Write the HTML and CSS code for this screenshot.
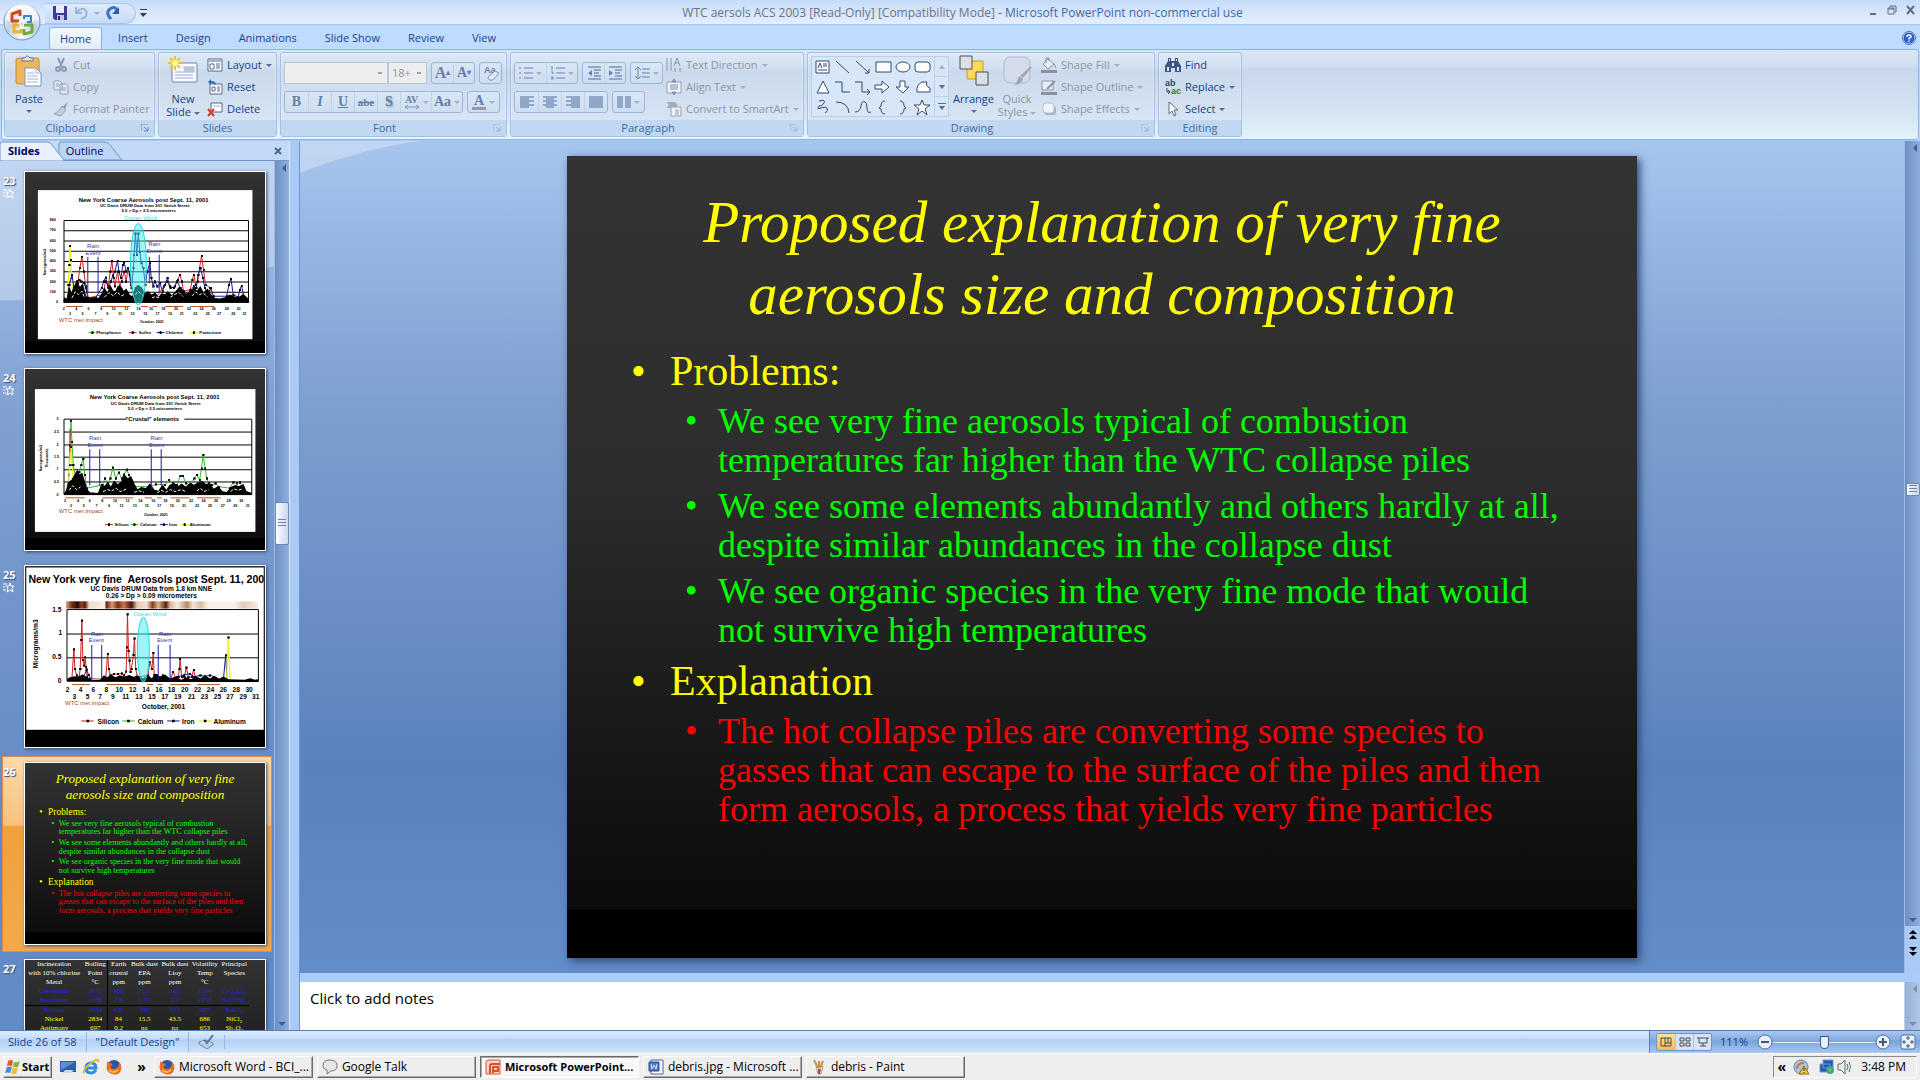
FILE: index.html
```html
<!DOCTYPE html>
<html lang="en">
<head>
    <meta charset="UTF-8">
    <meta name="viewport" content="width=device-width, initial-scale=1.0">
    <title>WTC aersols ACS 2003 - Microsoft PowerPoint</title>
    <link rel="stylesheet" href="styles.css">
</head>
<body>

<!-- Title bar -->
<header class="title-bar">
    <button class="orb" aria-label="Office Button">
        <svg viewBox="0 0 38 38" width="38" height="38">
            <defs>
                <radialGradient id="orb-fill" cx="50%" cy="85%" r="80%">
                    <stop offset="0" stop-color="#fff"/>
                    <stop offset=".5" stop-color="#c3cedd"/>
                    <stop offset="1" stop-color="#f4f8fd"/>
                </radialGradient>
                <!-- data point used by the chart thumbnails -->
                <marker id="dot" viewBox="0 0 7 7" refX="3" refY="3" markerWidth="7" markerHeight="7" markerUnits="userSpaceOnUse"><path d="M0 0h7v7H0z"/></marker>
                <clipPath id="plot-24"><rect x="118" y="140" width="568" height="241"/></clipPath>
                <clipPath id="plot-25"><rect x="127" y="131" width="579" height="220"/></clipPath>
            </defs>
            <circle cx="19" cy="19" r="18" fill="url(#orb-fill)" stroke="#6f8fb9"/>
            <path d="M2 17a17 17 0 0 1 34 0q-17 5-34 0z" fill="#fff" opacity=".6"/>
            <g fill="none" stroke-linejoin="round">
                <path d="M16 18H9V11l8-3v5" stroke="#d3481c" stroke-width="3"/>
                <path d="M21 16v-3h7v6h-4" stroke="#3f82c9" stroke-width="2"/>
                <path d="M17 22h-6v7h7v-3" stroke="#eeb226" stroke-width="3"/>
                <path d="M21 22h8v7l-8 2v-5" stroke="#6cae3c" stroke-width="3"/>
                <path d="M14 20h4v-4M24 20h-4v-4M16 22h2v4M23 25h-3v-3" stroke="#fff"/>
            </g>
        </svg>
    </button>
    <div class="quick-access">
        <button aria-label="Save">
            <svg viewBox="0 0 16 16" width="16" height="16"><path d="M1 1h14v14H3l-2-2z" fill="#403a97"/><path d="M4 1h8v7H4z" fill="#e9edfb"/><path d="M5 10h7v5H5z" fill="#c8c8dc"/><path d="M6 11h2v4H6z" fill="#2b2769"/></svg>
        </button>
        <button disabled aria-label="Undo">
            <svg viewBox="0 0 16 16" width="16" height="16"><path d="M3 2v6h6M4 7q6-6 9-1t-5 8" fill="none" stroke="#9db3d3" stroke-width="2"/></svg>
        </button>
        <i class="caret light"></i>
        <button aria-label="Redo">
            <svg viewBox="0 0 16 16" width="16" height="16"><path d="M6 14Q0 8 5 4t7 2" fill="none" stroke="#3f74c5" stroke-width="3"/><path d="M14 2v7H7z" fill="#2d5cae"/></svg>
        </button>
    </div>
    <button class="qat-more" aria-label="Customize Quick Access Toolbar">
        <svg viewBox="0 0 7 8" width="7" height="8"><path d="M0 0h7v1H0zM0 4h7L3 8z" fill="#2a3f63"/></svg>
    </button>
    <h1><span>WTC aersols ACS 2003 [Read-Only] [Compatibility Mode]</span> - Microsoft PowerPoint non-commercial use</h1>
    <div class="window-buttons">
        <button aria-label="Minimize"><svg viewBox="0 0 10 10" width="10" height="10"><path d="M2 8h6v2H2z" fill="#5f6f86"/></svg></button>
        <button aria-label="Restore"><svg viewBox="0 0 10 10" width="10" height="10"><path d="M3 2V1h6v6H8M1 3h6v6H1zM1 4h6" fill="none" stroke="#5f6f86"/></svg></button>
        <button aria-label="Close"><svg viewBox="0 0 10 10" width="10" height="10"><path d="M1 1l7 8M8 1L1 9" stroke="#5f6f86" stroke-width="2"/></svg></button>
    </div>
</header>

<!-- Ribbon tabs -->
<nav class="tabs">
    <button class="active">Home</button>
    <button>Insert</button>
    <button>Design</button>
    <button>Animations</button>
    <button>Slide Show</button>
    <button>Review</button>
    <button>View</button>
    <button class="help" aria-label="Help">
        <svg viewBox="0 0 14 14" width="14" height="14"><circle cx="7" cy="7" r="6" fill="#2a64c8" stroke="#d7e6fb"/><circle cx="7" cy="7" r="6.5" fill="none" stroke="#4a6fae"/><path d="M5 6q0-2 2-2t2 1.500q0 1-2 2v1M7 9.500v1.500" fill="none" stroke="#fff" stroke-width="1.500"/></svg>
    </button>
</nav>

<!-- Ribbon -->
<section class="ribbon">
    <div class="group clipboard">
        <div class="group-body">
            <button class="big">
                <svg viewBox="0 0 28 32" width="28" height="32"><rect x="1" y="3" width="23" height="26" rx="2" fill="#efb75a" stroke="#c88a35"/><path d="M7 6V3h3q2-4 5 0h3v3z" fill="#dfe3e8" stroke="#6c7684"/><path d="M10 13h11l5 5v13H10z" fill="#fff" stroke="#7e93b8"/><path d="M21 13v5h5M12 18h7M12 21h11M12 24h11M12 27h11" fill="none" stroke="#9db3d8"/></svg>
                <span>Paste</span>
                <i class="caret"></i>
            </button>
            <div class="stack">
                <button disabled><svg viewBox="0 0 16 16" width="16" height="16"><path d="M5 1l4 9M11 1L7 10" stroke="#8a9bb3" stroke-width="2"/><circle cx="5" cy="12" r="2" fill="none" stroke="#8a9bb3" stroke-width="2"/><circle cx="11" cy="12" r="2" fill="none" stroke="#8a9bb3" stroke-width="2"/></svg>Cut</button>
                <button disabled><svg viewBox="0 0 16 16" width="16" height="16"><path d="M1 2h6l2 2v7H1zM7 5h6l2 2v8H7z" fill="#e2e8f0" stroke="#97a5b9"/><path d="M3 5h3M3 7h3M9 9h4M9 11h4" stroke="#97a5b9"/></svg>Copy</button>
                <button disabled><svg viewBox="0 0 16 16" width="16" height="16"><path d="M15 1l-3 7-3-2z" fill="#8d9db4"/><path d="M9 5l4 4-5 6-7-2q5-2 8-8z" fill="#c2ccd9" stroke="#97a5b9"/></svg>Format Painter</button>
            </div>
        </div>
        <footer class="with-launcher">Clipboard<svg class="launcher" viewBox="0 0 8 8" width="8" height="8"><path d="M0 7V0h7M3 3l4 4M7 3v4H3" fill="none" stroke="#6a8cbd"/></svg></footer>
    </div>

    <div class="group slides">
        <div class="group-body">
            <button class="big">
                <svg viewBox="0 0 32 32" width="32" height="32"><rect x="5" y="8" width="25" height="19" rx="1" fill="#f8fafd" stroke="#6d84ab"/><path d="M16 12h11v5H8M8 20h18M8 23h18" fill="none" stroke="#9fb0cf"/><path d="M17 12h10v5H17z" fill="#b9c7de"/><path d="M8 1v14M1 8h14M3 3l10 10M13 3L3 13" stroke="#f1c232" stroke-width="2"/><circle cx="8" cy="8" r="3" fill="#fff6b0"/></svg>
                <span>New<br>Slide <i class="caret"></i></span>
            </button>
            <div class="stack">
                <button><svg viewBox="0 0 16 16" width="16" height="16"><path d="M1 2h14v12H1z" fill="#fff" stroke="#53698f"/><path d="M2 4h12M3 7h4v5H3zM9 7h4M9 9h4M9 11h4" fill="none" stroke="#53698f"/></svg>Layout <i class="caret"></i></button>
                <button><svg viewBox="0 0 16 16" width="16" height="16"><path d="M3 5h12v10H3z" fill="#fff" stroke="#53698f"/><path d="M5 8h3v4H5zM10 8h3M10 10h3M10 12h3" fill="none" stroke="#53698f"/><path d="M1 3l3-3v2q5 0 5 4-2-2-5-2v2z" fill="#2f67bd"/></svg>Reset</button>
                <button><svg viewBox="0 0 16 16" width="16" height="16"><path d="M4 2h11v9H4z" fill="#fff" stroke="#53698f"/><path d="M6 5h7" stroke="#9fb0cf"/><path d="M1 8l6 7M7 8l-6 7" stroke="#dc3a22" stroke-width="2"/></svg>Delete</button>
            </div>
        </div>
        <footer>Slides</footer>
    </div>

    <div class="group font">
        <div class="group-body">
            <div class="rows">
                <div class="row">
                    <div class="combo-row">
                        <select class="font-name" disabled aria-label="Font"><option></option></select>
                        <select class="font-size" disabled aria-label="Font Size"><option>18+</option></select>
                    </div>
                    <div class="button-set">
                        <button disabled class="serif grow">A<sup>▴</sup></button>
                        <button disabled class="serif shrink">A<sup>▾</sup></button>
                    </div>
                    <div class="button-set">
                        <button disabled class="clear" aria-label="Clear Formatting"><svg viewBox="0 0 18 18" width="18" height="18"><text x="2" y="9" class="svg-aa">Aa</text><path d="M6 13l7-6 4 2-6 7q-5 1-5-3z" fill="#e5ebf4" stroke="#8195b6"/></svg></button>
                    </div>
                </div>
                <div class="row">
                    <div class="button-set even">
                        <button disabled class="serif"><b>B</b></button>
                        <button disabled class="serif"><em>I</em></button>
                        <button disabled class="serif"><u>U</u></button>
                        <button disabled class="serif strike"><s>abe</s></button>
                        <button disabled class="serif shadow">S</button>
                        <button disabled class="serif wide"><svg viewBox="0 0 16 16" width="16" height="16"><text x="1" y="9" class="svg-av">AV</text><path d="M1 13h14M4 11l-3 2 3 2M12 11l3 2-3 2" fill="none" stroke="#7f96bd"/></svg><i class="caret light"></i></button>
                        <button disabled class="serif wide">Aa<i class="caret light"></i></button>
                    </div>
                    <div class="button-set">
                        <button disabled class="serif wide colour"><span>A</span><i class="caret light"></i></button>
                    </div>
                </div>
            </div>
        </div>
        <footer class="with-launcher">Font<svg class="launcher" viewBox="0 0 8 8" width="8" height="8"><path d="M0 7V0h7M3 3l4 4M7 3v4H3" fill="none" stroke="#9bb3d6"/></svg></footer>
    </div>

    <div class="group paragraph">
        <div class="group-body">
            <div class="rows">
                <div class="row">
                    <div class="button-set">
                        <button disabled class="wide" aria-label="Bullets"><svg viewBox="0 0 14 14" width="14" height="14"><path d="M5 2h9M5 7h9M5 12h9M0 2h2M0 7h2M0 12h2" stroke="#6883b0"/></svg><i class="caret light"></i></button>
                        <button disabled class="wide" aria-label="Numbering"><svg viewBox="0 0 14 14" width="14" height="14"><path d="M5 2h9M5 7h9M5 12h9M1 0v4M0 6h2v2M0 11h2v2H0" fill="none" stroke="#6883b0"/></svg><i class="caret light"></i></button>
                    </div>
                    <div class="button-set">
                        <button disabled aria-label="Decrease Indent"><svg viewBox="0 0 16 14" width="16" height="14"><path d="M2 1h13M8 4h7M8 7h5M8 10h7M2 13h13" stroke="#4f6d9f"/><path d="M6 4v6L2 7zM0 7h4" fill="#6883b0"/></svg></button>
                        <button disabled aria-label="Increase Indent"><svg viewBox="0 0 16 14" width="16" height="14"><path d="M2 1h13M8 4h7M8 7h5M8 10h7M2 13h13" stroke="#4f6d9f"/><path d="M2 4v6l4-3z" fill="#6883b0"/></svg></button>
                    </div>
                    <div class="button-set">
                        <button disabled class="wide" aria-label="Line Spacing"><svg viewBox="0 0 15 14" width="15" height="14"><path d="M7 3h8M7 7h8M7 11h8M3 1v12M0 4l3-3 3 3M0 10l3 3 3-3" fill="none" stroke="#6883b0"/></svg><i class="caret light"></i></button>
                    </div>
                </div>
                <div class="row">
                    <div class="button-set even">
                        <button disabled aria-label="Align Left"><svg viewBox="0 0 14 12" width="14" height="12"><path d="M0 1h14M0 3h9M0 5h14M0 7h9M0 9h14M0 11h9" stroke="#4f6d9f"/></svg></button>
                        <button disabled aria-label="Center"><svg viewBox="0 0 14 12" width="14" height="12"><path d="M0 1h14M3 3h8M0 5h14M3 7h8M0 9h14M3 11h8" stroke="#4f6d9f"/></svg></button>
                        <button disabled aria-label="Align Right"><svg viewBox="0 0 14 12" width="14" height="12"><path d="M0 1h14M5 3h9M0 5h14M5 7h9M0 9h14M5 11h9" stroke="#4f6d9f"/></svg></button>
                        <button disabled aria-label="Justify"><svg viewBox="0 0 14 12" width="14" height="12"><path d="M0 1h14M0 3h14M0 5h14M0 7h14M0 9h14M0 11h14" stroke="#4f6d9f"/></svg></button>
                    </div>
                    <div class="button-set">
                        <button disabled class="wide" aria-label="Columns"><svg viewBox="0 0 14 12" width="14" height="12"><path d="M0 1h6M0 3h6M0 5h6M0 7h6M0 9h6M0 11h6M8 1h6M8 3h6M8 5h6M8 7h6M8 9h6M8 11h6" stroke="#4f6d9f"/></svg><i class="caret light"></i></button>
                    </div>
                </div>
            </div>
            <div class="stack">
                <button disabled><svg viewBox="0 0 16 16" width="16" height="16"><path d="M1 1v13M5 1v13M9 11v4M14 11v4M8 9l3-8 3 8M9 6h4" fill="none" stroke="#7f93b3"/></svg>Text Direction <i class="caret light"></i></button>
                <button disabled><svg viewBox="0 0 16 16" width="16" height="16"><path d="M1 3h14v11H1z" fill="#eef2f7" stroke="#93a1b5"/><path d="M4 6h8M4 8h8M4 10h8M8 0L6 3h4zM8 16l-2-3h4z" fill="#8695ab" stroke="#8695ab"/></svg>Align Text <i class="caret light"></i></button>
                <button disabled><svg viewBox="0 0 16 16" width="16" height="16"><path d="M0 1h9l3 3-3 3H0l3-3z" fill="#a4aebc"/><path d="M5 6h10v9H5z" fill="#f2f5f9" stroke="#93a1b5"/><path d="M9 9h4M9 11h4M9 13h4" stroke="#93a1b5"/></svg>Convert to SmartArt <i class="caret light"></i></button>
            </div>
        </div>
        <footer class="with-launcher">Paragraph<svg class="launcher" viewBox="0 0 8 8" width="8" height="8"><path d="M0 7V0h7M3 3l4 4M7 3v4H3" fill="none" stroke="#9bb3d6"/></svg></footer>
    </div>

    <div class="group drawing">
        <div class="group-body">
            <div class="gallery">
                <svg viewBox="0 0 122 60" width="122" height="60" fill="none" stroke="#33486f">
                    <path d="M4 4h13v12H4z" fill="#fff"/><path d="M6 11l2-5 2 5M11 7h4M11 9h4M6 13h9"/>
                    <path d="M24 4l13 12M44 4l13 12M57 12v4h-4"/>
                    <path d="M64 5h15v10H64z" fill="#fff"/><ellipse cx="91" cy="10" rx="7" ry="5" fill="#fff"/><rect x="103" y="5" width="15" height="10" rx="3" fill="#fff"/>
                    <path d="M11 24L5 36h12z" fill="#fff"/><path d="M23 25h7v10h8M43 25h7v10h8M55 32l3 3-3 3"/>
                    <path d="M63 28h7v-4l7 6-7 6v-4h-7zM88 24h5v6h4l-6 6-7-6h4z" fill="#fff"/><path d="M105 35q-1-7 5-10h5q-2 4 3 6v4z" fill="#fff"/>
                    <path d="M7 44q7-2 5 2t-5 3q-3 4 2 2t6 0q2 3-2 5M24 45q12 0 13 11M43 55q5 0 6-6t4-4q2 0 2 6t4 4M73 44q-4 0-4 5l-2 2 2 1q0 5 4 5M88 44q4 0 4 5l2 2-2 1q0 5-4 5"/>
                    <path d="M110 43l2 5h6l-5 4 2 6-5-4-5 4 2-6-5-4h6z" fill="#fff"/>
                </svg>
                <div class="gallery-scroll">
                    <button aria-label="Row up" disabled><svg viewBox="0 0 6 4" width="6" height="4"><path d="M0 4l3-4 3 4z" fill="#a3b0c4"/></svg></button>
                    <button aria-label="Row down"><svg viewBox="0 0 6 4" width="6" height="4"><path d="M0 0h6L3 4z" fill="#4f6f9f"/></svg></button>
                    <button aria-label="More shapes"><svg viewBox="0 0 8 7" width="8" height="7"><path d="M0 0h8v1H0zM1 3h6L4 7z" fill="#4f6f9f"/></svg></button>
                </div>
            </div>
            <button class="big arrange">
                <svg viewBox="0 0 32 32" width="32" height="32"><path d="M9 6h16v18H9z" fill="#ffd95a" stroke="#c9992c"/><path d="M2 1h12v13H2z" fill="#dcdfe3" stroke="#4c525b"/><path d="M18 17h12v13H18z" fill="#dcdfe3" stroke="#4c525b"/></svg>
                <span>Arrange</span>
                <i class="caret"></i>
            </button>
            <button class="big" disabled>
                <svg viewBox="0 0 32 32" width="32" height="32"><rect x="3" y="2" width="26" height="26" rx="6" fill="#d3dce8" stroke="#aab8ca"/><path d="M31 12l-9 11-3-2 10-9zM18 21l4 3q-2 6-9 6 3-2 5-9z" fill="#9aa8ba"/></svg>
                <span>Quick<br>Styles <i class="caret light"></i></span>
            </button>
            <div class="stack">
                <button disabled><svg viewBox="0 0 16 16" width="16" height="16"><path d="M7 2l6 5-6 5-5-5z" fill="#e8edf4" stroke="#8493a8"/><path d="M5 6V1h3v3M13 7l2 4" fill="none" stroke="#8493a8"/><path d="M0 13h16v3H0z" fill="#8c9199"/></svg>Shape Fill <i class="caret light"></i></button>
                <button disabled><svg viewBox="0 0 16 16" width="16" height="16"><path d="M1 2h11v9H1z" fill="#e8edf4" stroke="#8493a8"/><path d="M14 2L6 10" stroke="#8493a8" stroke-width="2"/><path d="M0 13h16v3H0z" fill="#8c9199"/></svg>Shape Outline <i class="caret light"></i></button>
                <button disabled><svg viewBox="0 0 16 16" width="16" height="16"><rect x="3" y="5" width="12" height="9" rx="3" fill="#a5b1c2"/><rect x="2" y="2" width="11" height="10" rx="3" fill="#eef2f7" stroke="#b3bfce"/></svg>Shape Effects <i class="caret light"></i></button>
            </div>
        </div>
        <footer class="with-launcher">Drawing<svg class="launcher" viewBox="0 0 8 8" width="8" height="8"><path d="M0 7V0h7M3 3l4 4M7 3v4H3" fill="none" stroke="#9bb3d6"/></svg></footer>
    </div>

    <div class="group editing">
        <div class="group-body">
            <div class="stack">
                <button><svg viewBox="0 0 16 16" width="16" height="16"><path d="M3 1h3v3h4V1h3v3l3 5v6h-6v-4H6v4H0V9l3-5z" fill="#3d5787"/><path d="M2 10h2v4H2zM12 10h2v4h-2zM7 6h2v3H7zM4 2h1v2H4zM11 2h1v2h-1z" fill="#dce8f8"/></svg>Find</button>
                <button><svg viewBox="0 0 16 16" width="16" height="16"><text x="0" y="7" class="svg-ab">ab</text><text x="6" y="15" class="svg-ac">ac</text><path d="M2 9v4h3M3 11l2 2-2 2" fill="none" stroke="#33486f"/></svg>Replace <i class="caret"></i></button>
                <button><svg viewBox="0 0 16 16" width="16" height="16"><path d="M4 1v12l3-3 2 5 2-1-2-5h4z" fill="#fff" stroke="#5b6b86"/></svg>Select <i class="caret"></i></button>
            </div>
        </div>
        <footer>Editing</footer>
    </div>
</section>

<!-- Work area -->
<main class="work">
    <aside class="panel">
        <div class="panel-tabs">
            <svg class="tab-shape" viewBox="0 0 130 20" width="130" height="20"><path d="M59 19V3q0-2 3-2h43q3 0 5 3l12 15z" fill="#bcd5f5" stroke="#6f97cd"/><path d="M0 20V3q0-2 3-2h44q3 0 5 3l12 15v1z" fill="#e8f1fd" stroke="#6f97cd"/></svg>
            <button class="active">Slides</button>
            <button>Outline</button>
            <button class="close" aria-label="Close panel"><svg viewBox="0 0 8 8" width="8" height="8"><path d="M1 1l6 6M7 1L1 7" stroke="#4d6a97" stroke-width="2"/></svg></button>
        </div>
        <div class="panel-body">
            <ol class="thumbs">
                <li>
                    <div class="num">23<svg viewBox="0 0 12 11" width="12" height="11"><path d="M7 1l1 3h3L9 6l1 4-3-2-3 2 1-4-2-2h3zM0 2h4M0 5h2M0 8h3" fill="none" stroke="#fff"/></svg></div>
                    <svg class="thumb" viewBox="0 0 726 546">
                        <rect x="39" y="54" width="649" height="451" fill="#fff"/>
                        <g class="chart-text">
                            <text x="359" y="89" class="t18">New York Coarse Aerosols post Sept. 11, 2001</text>
                            <text x="362" y="104" class="t13">UC Davis DRUM Data from 201 Varick Street</text>
                            <text x="374" y="119" class="t13">5.0 &gt; Dp &gt; 2.5 micrometers</text>
                            <text x="84" y="148" class="t11">800</text><text x="84" y="179" class="t11">700</text><text x="84" y="210" class="t11">600</text><text x="84" y="241" class="t11">500</text><text x="84" y="272" class="t11">400</text><text x="84" y="303" class="t11">300</text><text x="84" y="335" class="t11">200</text><text x="84" y="366" class="t11">100</text><text x="97" y="396" class="t11">0</text>
                            <text x="62" y="275" class="t11 up">Nanograms/m3</text>
                            <text x="384" y="457" class="t11">October, 2001</text>
                            <text x="253" y="490" class="t13">Phosphorus</text><text x="363" y="490" class="t13">Sulfur</text><text x="452" y="490" class="t13">Chlorine</text><text x="560" y="490" class="t13">Potassium</text>
                        </g>
                        <g class="axis-days"><text x="117" y="416">2</text><text x="155" y="416">4</text><text x="192" y="416">6</text><text x="231" y="416">8</text><text x="268" y="416">10</text><text x="306" y="416">12</text><text x="343" y="416">14</text><text x="381" y="416">16</text><text x="418" y="416">18</text><text x="457" y="416">20</text><text x="496" y="416">22</text><text x="534" y="416">24</text><text x="571" y="416">26</text><text x="610" y="416">28</text><text x="646" y="416">30</text><text x="136" y="432">3</text><text x="174" y="432">5</text><text x="213" y="432">7</text><text x="249" y="432">9</text><text x="288" y="432">11</text><text x="325" y="432">13</text><text x="364" y="432">15</text><text x="401" y="432">17</text><text x="439" y="432">19</text><text x="474" y="432">21</text><text x="515" y="432">23</text><text x="553" y="432">25</text><text x="588" y="432">27</text><text x="630" y="432">29</text><text x="664" y="432">31</text></g>
                        <path class="grid" d="M118 146h558v247H118zM118 177h558M118 208h558M118 239h558M118 270h558M118 301h558M118 332h558M118 363h558"/>
                        <polyline class="line yellow" points="128,388 131,340 134,280 136,223 139,265 141,318 146,380"/>
                        <polyline class="line red" points="150,350 160,335 166,290 172,255 178,300 184,345 192,380 236,370 244,330 252,345 258,300 263,267 268,320 272,345 280,300 286,345 292,330 300,300 306,330 312,290 320,340 330,375"/>
                        <polyline class="line red" points="400,375 420,345 430,330 440,350 454,345 462,325 469,310 474,330 480,360 500,355 506,325 511,310 516,340 522,330 528,290 534,252 540,295 546,340 560,350 566,370"/>
                        <polyline class="line navy" points="128,385 134,340 142,310 148,350 156,330 164,325 170,330 178,335 184,350 190,380 214,380 232,350 238,330 244,318 252,350 260,330 266,312 272,300 280,267 284,300 290,320 296,280 300,273 306,300 312,290 318,310 322,350 328,290 330,250 334,185 338,250 343,185 347,240 352,275 358,290 364,340 370,300 378,275 382,320 388,345 392,330 400,345 408,335 416,360 424,340 431,320 438,345 450,350 460,330 470,350 480,375 500,360 510,345 518,350 524,310 531,290 538,320 544,350 552,370 562,350 570,375 610,375 617,340 623,322 630,370 645,378 650,355 655,343 661,372"/>
                        <path class="base" d="M118 393l2-12 8 4 6-35 6 20 10-25 8-10 8 15 8-10 8 32 8 13 16-5 16 3 10-13 8-18 10 16 8-23 8 15 8 2 8-17 10 5 6 12 8-7 10 17 10 6 8-28 8-7 10 7 10 20 10-8 10 10 12-6 10 14 10-12 10 4 8-10 12 12 12-12 10-12 10 6 10 14 14-6 12-14 8 12 10-14 10 18 12-11 10 17 12 10 16 2 16-4 14-8 14 6 14 2 12-10 14 14 2 9z"/>
                        <path class="gap" d="M142 380l10-18 10 8 10-10 8 20M240 378l14-14 14 10 10-12 14 12 12-6M334 370l8-10 14 12M384 380l10-4 12 4M440 378l12-8 14-6 12 12M506 374l10-12 12 8 12-4 12 10"/>
                        <path class="rain" d="M190 256v108M221 256v108M376 256v80M406 250v115"/>
                        <ellipse class="ocean" cx="343" cy="278" rx="24" ry="123"/>
                        <g class="notes-text"><text x="349" y="144" class="cyan">Ocean Wind</text><text x="206" y="228">Rain</text><text x="206" y="249">Event</text><text x="391" y="222">Rain</text><text x="391" y="243">Event</text><text x="169" y="454" class="brown">WTC met impact</text></g>
                        <path class="met" d="M123 406h52M230 406h88M351 406h22M386 406h14M424 406h54M500 406h72"/>
                        <path class="line green" d="M192 485h20"/><path class="line red" d="M314 485h24"/><path class="line navy" d="M398 485h24"/><path class="line yellow" d="M498 485h28"/>
                        <path d="M201 481h6v8h-6zM323 481h6v8h-6zM407 481h6v8h-6zM508 481h6v8h-6z"/>
                    </svg>
                </li>
                <li>
                    <div class="num">24<svg viewBox="0 0 12 11" width="12" height="11"><path d="M7 1l1 3h3L9 6l1 4-3-2-3 2 1-4-2-2h3zM0 2h4M0 5h2M0 8h3" fill="none" stroke="#fff"/></svg></div>
                    <svg class="thumb" viewBox="0 0 726 546">
                        <rect x="30" y="60" width="667" height="432" fill="#fff"/>
                        <g class="chart-text">
                            <text x="392" y="90" class="t18">New York Coarse Aerosols post Sept. 11, 2001</text>
                            <text x="395" y="107" class="t13">UC Davis DRUM Data from 201 Varick Street</text>
                            <text x="393" y="122" class="t13">5.0 &gt; Dp &gt; 2.5 micrometers</text>
                            <text x="98" y="155" class="t11">3</text><text x="95" y="194" class="t11">2.5</text><text x="98" y="231" class="t11">2</text><text x="95" y="269" class="t11">1.5</text><text x="98" y="306" class="t11">1</text><text x="95" y="344" class="t11">0.5</text><text x="98" y="382" class="t11">0</text>
                            <text x="49" y="272" class="t11 up">Nanograms/m3</text><text x="67" y="272" class="t11 up">Thousands</text>
                            <text x="396" y="443" class="t11">October, 2001</text>
                            <text x="292" y="474" class="t13">Silicon</text><text x="373" y="474" class="t13">Calcium</text><text x="448" y="474" class="t13">Iron</text><text x="530" y="474" class="t13">Aluminum</text>
                        </g>
                        <g class="axis-days"><text x="121" y="401">2</text><text x="160" y="401">4</text><text x="196" y="401">6</text><text x="234" y="401">8</text><text x="272" y="401">10</text><text x="310" y="401">12</text><text x="349" y="401">14</text><text x="388" y="401">16</text><text x="424" y="401">18</text><text x="462" y="401">20</text><text x="502" y="401">22</text><text x="540" y="401">24</text><text x="578" y="401">26</text><text x="616" y="401">28</text><text x="654" y="401">30</text><text x="139" y="416">3</text><text x="178" y="416">5</text><text x="216" y="416">7</text><text x="254" y="416">9</text><text x="292" y="416">11</text><text x="332" y="416">13</text><text x="368" y="416">15</text><text x="406" y="416">17</text><text x="444" y="416">19</text><text x="481" y="416">21</text><text x="520" y="416">23</text><text x="560" y="416">25</text><text x="598" y="416">27</text><text x="636" y="416">29</text><text x="674" y="416">31</text></g>
                        <path class="grid" d="M118 151h568v228H118zM118 190h568M118 229h568M118 266h568M118 304h568M118 341h568"/>
                        <rect x="308" y="140" width="174" height="20" fill="#fff"/>
                        <text x="385" y="156" class="t18 mid">"Crustal" elements</text>
                        <polyline class="line green" points="126,375 133,320 136,230 139,155 142,220 146,290 154,330 164,310 170,290 176,270 181,320 186,360 234,350 242,330 250,345 258,330 266,297 274,330 284,312 292,330 300,318 308,303 314,320 320,335 326,355 380,355 396,348 424,350 436,335 448,345 460,350 470,322 478,322 486,345 500,350 512,330 520,320 528,335 534,300 539,258 545,300 550,330 556,345 566,350 576,345 586,355 620,360 630,342 640,345 650,342 660,360"/>
                        <polyline class="line yellow" points="132,350 135,290 139,235 143,290 146,340"/><path class="line red" d="M136 180v70"/>
                        <polygon class="base" clip-path="url(#plot-24)" points="118,379 126,367 132,342 142,336 150,322 158,308 164,320 172,316 180,342 188,366 196,374 222,376 232,350 240,356 250,345 260,358 270,340 280,350 292,342 300,320 310,332 320,326 330,348 340,366 352,358 366,362 378,348 390,366 404,370 416,352 428,368 438,352 450,346 462,356 474,348 486,358 500,346 512,352 524,344 536,340 548,350 558,345 570,364 584,356 596,370 610,374 624,358 636,352 648,356 660,350 668,370 686,376 686,379"/>
                        <path class="gap" d="M134 366l10-14 12 12 12-8M236 370l14-6 12 4 14-8 12 10 20-8M330 372l16-4 14 4M400 374l12-8 14 6 14-8 14 6 18-6 14 6M520 368l10-8 12 10 14-6M622 370l10-8 12 4 14-4"/>
                        <path class="rain" d="M196 242v110M226 242v110M382 242v125M412 242v110"/>
                        <g class="notes-text"><text x="212" y="215">Rain</text><text x="212" y="236">Event</text><text x="398" y="215">Rain</text><text x="398" y="236">Event</text><text x="169" y="434" class="brown">WTC met impact</text></g>
                        <path class="met" d="M123 389h58M234 389h94M362 389h22M400 389h14M440 389h58M520 389h72"/>
                        <path class="line red" d="M242 470h24"/><path class="line green" d="M319 470h24"/><path class="line navy" d="M408 470h24"/><path class="line yellow" d="M470 470h28"/>
                        <path d="M251 466h6v8h-6zM328 466h6v8h-6zM417 466h6v8h-6zM480 466h6v8h-6z"/>
                    </svg>
                </li>
                <li>
                    <div class="num">25<svg viewBox="0 0 12 11" width="12" height="11"><path d="M7 1l1 3h3L9 6l1 4-3-2-3 2 1-4-2-2h3zM0 2h4M0 5h2M0 8h3" fill="none" stroke="#fff"/></svg></div>
                    <svg class="thumb" viewBox="0 0 726 546">
                        <rect x="4" y="4" width="718" height="491" fill="#fff"/><rect x="4" y="495" width="718" height="48"/>
                        <defs>
                            <linearGradient id="filter-strip">
                                <stop offset="0" stop-color="#d8a98a"/><stop offset=".03" stop-color="#7b2e12"/><stop offset=".06" stop-color="#260a04"/><stop offset=".08" stop-color="#8e4523"/><stop offset=".1" stop-color="#5b1c0b"/><stop offset=".12" stop-color="#efdcc9"/><stop offset=".2" stop-color="#f8f0e6"/><stop offset=".21" stop-color="#6b2410"/><stop offset=".24" stop-color="#d59a72"/><stop offset=".27" stop-color="#7b2e12"/><stop offset=".3" stop-color="#c5764f"/><stop offset=".34" stop-color="#4b1407"/><stop offset=".37" stop-color="#e6cbb2"/><stop offset=".42" stop-color="#f3e0cf"/><stop offset=".45" stop-color="#8a3c1c"/><stop offset=".48" stop-color="#e0b894"/><stop offset=".52" stop-color="#5b1c0b"/><stop offset=".54" stop-color="#d9b597"/><stop offset=".58" stop-color="#f7ece0"/><stop offset=".63" stop-color="#b98765"/><stop offset=".66" stop-color="#f3e7da"/><stop offset=".7" stop-color="#d8bda5"/><stop offset=".74" stop-color="#f8f1ea"/><stop offset=".88" stop-color="#f8f1ea"/><stop offset=".92" stop-color="#dfcbb8"/><stop offset="1" stop-color="#f6eee6"/>
                            </linearGradient>
                        </defs>
                        <rect x="124" y="106" width="582" height="22" fill="url(#filter-strip)"/>
                        <g class="chart-text">
                            <text x="367" y="51" class="t32">New York very fine&#160; Aerosols post Sept. 11, 200</text>
                            <text x="382" y="74" class="t20">UC Davis DRUM Data from 1.8 km NNE</text>
                            <text x="382" y="97" class="t20">0.26 &gt; Dp &gt; 0.09 micrometers</text>
                            <text x="96" y="137" class="t20">1.5</text><text x="107" y="209" class="t20">1</text><text x="96" y="281" class="t20">0.5</text><text x="105" y="353" class="t20">0</text>
                            <text x="34" y="240" class="t20 up">Micrograms/m3</text>
                            <text x="419" y="433" class="t20">October, 2001</text>
                            <text x="252" y="476" class="t20">Silicon</text><text x="380" y="476" class="t20">Calcium</text><text x="494" y="476" class="t20">Iron</text><text x="619" y="476" class="t20">Aluminum</text>
                        </g>
                        <g class="axis-days large"><text x="129" y="381">2</text><text x="168" y="381">4</text><text x="207" y="381">6</text><text x="246" y="381">8</text><text x="285" y="381">10</text><text x="326" y="381">12</text><text x="366" y="381">14</text><text x="405" y="381">16</text><text x="443" y="381">18</text><text x="483" y="381">20</text><text x="522" y="381">22</text><text x="561" y="381">24</text><text x="600" y="381">26</text><text x="639" y="381">28</text><text x="678" y="381">30</text><text x="149" y="402">3</text><text x="189" y="402">5</text><text x="227" y="402">7</text><text x="266" y="402">9</text><text x="305" y="402">11</text><text x="345" y="402">13</text><text x="384" y="402">15</text><text x="423" y="402">17</text><text x="462" y="402">19</text><text x="504" y="402">21</text><text x="543" y="402">23</text><text x="582" y="402">25</text><text x="620" y="402">27</text><text x="660" y="402">29</text><text x="698" y="402">31</text></g>
                        <path class="grid" d="M127 131h579v216H127zM127 205h579M127 277h579"/>
                        <polyline class="line red" points="130,345 142,338 148,251 151,310 156,330 164,335 167,310 170,223 172,164 175,284 179,300 182,275 185,305 188,335 196,340 244,342 250,265 253,310 258,330 268,326 280,326 292,324 300,330 306,318 308,245 310,145 313,256 316,285 319,320 322,310 328,268 331,218 335,310 340,335 372,330 378,290 384,310 388,262 391,328 398,328 404,340 416,330 420,342 440,342 448,320 456,338 464,335 467,310 469,280 474,335 482,335 488,306 494,335 504,335 510,314 516,338"/>
                        <polyline class="line navy" points="176,340 186,312 192,328 200,342"/><polyline class="line navy" points="600,345 607,269 611,342"/><polyline class="line yellow" points="610,345 615,215 620,345"/>
                        <polyline class="line navy" points="440,342 460,334 480,330 498,325 512,334 530,330 545,333 560,330 572,334 580,344"/>
                        <path class="base" clip-path="url(#plot-25)" d="M127 347l6-8 16-4 14 2 10-8 10 6 14 10 30 1 12-14 10 6 12-8 12 8 14-6 14 4 14-5 14 6 10-5 20 10 12-12 12 12 12-14 14 8 14-6 16 12 16-6 18 10 14-8 16 6 14-10 14 8 14-10 14 10 14-8 14 8 14-6 14 8 50 1 16-4 14 4 30-4 18 4v4z"/>
                        <path class="rain" d="M202 238v108M232 238v108M403 238v108M439 238v108"/>
                        <ellipse class="ocean" cx="358" cy="252" rx="18" ry="98"/>
                        <g class="notes-text"><text x="377" y="150" class="cyan">Ocean Wind</text><text x="218" y="210">Rain</text><text x="216" y="230">Event</text><text x="424" y="210">Rain</text><text x="422" y="230">Event</text><text x="188" y="420" class="brown">WTC met impact</text></g>
                        <path class="met" d="M142 358h54M246 358h92M370 358h18M402 358h14M440 358h60M522 358h68"/>
                        <path class="line red" d="M170 468h38"/><path class="line green" d="M294 468h38"/><path class="line navy" d="M430 468h38"/><path class="line yellow" d="M526 468h38"/>
                        <path d="M186 464h8v8h-8zM309 464h8v8h-8zM445 464h8v8h-8zM541 464h8v8h-8z"/>
                    </svg>
                </li>
                <li class="selected">
                    <div class="num">26</div>
                    <svg class="thumb" viewBox="0 0 1070 802">
                        <g class="mini-title"><text x="535" y="86">Proposed explanation of very fine</text><text x="535" y="158">aerosols size and composition</text></g>
                        <g class="mini-one"><text x="64" y="228">•</text><text x="103" y="228">Problems:</text><text x="64" y="540">•</text><text x="103" y="540">Explanation</text></g>
                        <g class="mini-two"><text x="118" y="278">•</text><text x="151" y="278">We see very fine aerosols typical of combustion</text><text x="151" y="316">temperatures far higher than the WTC collapse piles</text><text x="118" y="363">•</text><text x="151" y="363">We see some elements abundantly and others hardly at all,</text><text x="151" y="402">despite similar abundances in the collapse dust</text><text x="118" y="449">•</text><text x="151" y="449">We see organic species in the very fine mode that would</text><text x="151" y="487">not survive high temperatures</text></g>
                        <g class="mini-two red"><text x="118" y="589">•</text><text x="151" y="589">The hot collapse piles are converting some species to</text><text x="151" y="628">gasses that can escape to the surface of the piles and then</text><text x="151" y="666">form aerosols, a process that yields very fine particles</text></g>
                    </svg>
                </li>
                <li>
                    <div class="num">27</div>
                    <div class="thumb table-thumb">
                        <table>
                            <thead>
                                <tr><th>Incineration<br>with 10% chlorine<br>Metal</th><th>Boiling<br>Point<br>°C</th><th>Earth<br>crustal<br>ppm</th><th>Bulk dust<br>EPA<br>ppm</th><th>Bulk dust<br>Lioy<br>ppm</th><th>Volatility<br>Temp<br>°C</th><th>Principal<br>Species</th></tr>
                            </thead>
                            <tbody>
                                <tr class="blue"><td>Chromium</td><td>2672</td><td>100</td><td>71.5</td><td>165</td><td>1594</td><td>CrO<sub>2</sub>Cl<sub>2</sub></td></tr>
                                <tr class="blue"><td>Beryllium</td><td>1280</td><td>2.8</td><td>1.77</td><td>3.2</td><td>1053</td><td>Be(OH)<sub>2</sub></td></tr>
                                <tr class="blue line-above"><td>Barium</td><td>1634</td><td>425</td><td>390</td><td>337</td><td>907</td><td>BaCl<sub>2</sub></td></tr>
                                <tr><td>Nickel</td><td>2834</td><td>84</td><td>15.5</td><td>43.5</td><td>686</td><td>NiCl<sub>2</sub></td></tr>
                                <tr><td>Antimony</td><td>697</td><td>0.2</td><td>na</td><td>na</td><td>653</td><td>Sb<sub>2</sub>O<sub>3</sub></td></tr>
                            </tbody>
                        </table>
                    </div>
                </li>
            </ol>
            <div class="scrollbar">
                <i class="arrow up"></i>
                <div class="track"><div class="grip"></div></div>
                <i class="arrow"></i>
            </div>
        </div>
    </aside>

    <div class="editor">
        <div class="stage">
            <div class="canvas">
                <svg class="swoosh" viewBox="0 0 120 36" width="120" height="36"><path d="M0 0h120Q60 8 0 32z" fill="#fff" opacity=".3"/></svg>
                <article class="slide">
                    <h2>Proposed explanation of very fine<br>aerosols size and composition</h2>
                    <ul>
                        <li>Problems:
                            <ul>
                                <li>We see very fine aerosols typical of combustion<br>temperatures far higher than the WTC collapse piles</li>
                                <li>We see some elements abundantly and others hardly at all,<br>despite similar abundances in the collapse dust</li>
                                <li>We see organic species in the very fine mode that would<br>not survive high temperatures</li>
                            </ul>
                        </li>
                        <li>Explanation
                            <ul class="answer">
                                <li>The hot collapse piles are converting some species to<br>gasses that can escape to the surface of the piles and then<br>form aerosols, a process that yields very fine particles</li>
                            </ul>
                        </li>
                    </ul>
                </article>
            </div>
            <div class="scrollbar main-scroll">
                <i class="arrow up"></i>
                <div class="track"><div class="grip"></div></div>
                <i class="arrow"></i>
                <div class="slide-nav">
                    <button aria-label="Previous Slide"><svg viewBox="0 0 8 10" width="8" height="10"><path d="M0 4l4-4 4 4zM0 9l4-4 4 4z"/></svg></button>
                    <button aria-label="Next Slide"><svg viewBox="0 0 8 10" width="8" height="10"><path d="M0 1l4 4 4-4zM0 6l4 4 4-4z"/></svg></button>
                </div>
            </div>
        </div>
        <div class="notes">
            <textarea aria-label="Notes" placeholder="Click to add notes"></textarea>
            <div class="scrollbar off">
                <i class="arrow up"></i>
                <div class="track"></div>
                <i class="arrow"></i>
            </div>
        </div>
    </div>
</main>

<!-- Status bar -->
<footer class="status">
    <span>Slide 26 of 58</span>
    <span>"Default Design"</span>
    <span><svg viewBox="0 0 17 14" width="17" height="14"><path d="M1 7l6-2 8 3-6 4z" fill="#fff" stroke="#6d84ab"/><path d="M1 7v2l8 5 6-4V8" fill="#bccbe0" stroke="#6d84ab"/><path d="M6 5l3 3 6-8" fill="none" stroke="#5474ad" stroke-width="2"/></svg></span>
    <div class="status-right">
        <div class="views">
            <button class="active" aria-label="Normal"><svg viewBox="0 0 12 10" width="12" height="10"><path d="M1 1h10v8H1zM5 1v8M5 6h6M8 1v5" fill="none" stroke="#4d4d4d"/></svg></button>
            <button aria-label="Slide Sorter"><svg viewBox="0 0 12 10" width="12" height="10"><path d="M1 1h4v3H1zM7 1h4v3H7zM1 6h4v3H1zM7 6h4v3H7z" fill="none" stroke="#4d4d4d"/></svg></button>
            <button aria-label="Slide Show"><svg viewBox="0 0 12 10" width="12" height="10"><path d="M0 1h12M2 1v5h8V1M6 6v3M3 9h6" fill="none" stroke="#4d4d4d"/></svg></button>
        </div>
        <span class="percent">111%</span>
        <button aria-label="Zoom Out"><svg viewBox="0 0 16 16" width="16" height="16"><circle cx="8" cy="8" r="7" fill="#e6effb" stroke="#5b6f93"/><path d="M4 8h8" stroke="#46597c" stroke-width="2"/></svg></button>
        <input type="range" min="10" max="212" value="111" aria-label="Zoom">
        <button aria-label="Zoom In"><svg viewBox="0 0 16 16" width="16" height="16"><circle cx="8" cy="8" r="7" fill="#e6effb" stroke="#5b6f93"/><path d="M4 8h8M8 4v8" stroke="#46597c" stroke-width="2"/></svg></button>
        <button class="fit" aria-label="Fit to window"><svg viewBox="0 0 16 16" width="16" height="16"><rect x="1" y="1" width="14" height="14" rx="2" fill="#eaf2fc" stroke="#5b6f93"/><path d="M8 2v4M6 4h4M8 10v4M6 12h4M2 8h4M4 6v4M10 8h4M12 6v4" stroke="#46597c"/></svg></button>
    </div>
</footer>

<!-- Taskbar -->
<footer class="taskbar">
    <button class="start"><svg viewBox="0 0 16 16" width="16" height="16"><path d="M3 2q3-2 5 0L7 7Q4 6 2 7z" fill="#e8562a"/><path d="M9 3q3 1 6-1l-2 6q-3 1-5-1z" fill="#7fb93b"/><path d="M2 8q3-1 5 0l-2 6q-2-1-5 0z" fill="#3f8fd8"/><path d="M8 8q2 2 5 1l-2 6q-3 1-5-1z" fill="#f5c02e"/></svg>Start</button>
    <div class="quick-launch">
        <a href="#" aria-label="Show Desktop"><svg viewBox="0 0 16 16" width="16" height="16"><path d="M0 2h16v11H0z" fill="#2f5fa8"/><path d="M1 3h14L1 11z" fill="#5d8fd6"/><path d="M5 11h8l-1 3H3z" fill="#ccd6e4"/></svg></a>
        <a href="#" aria-label="Internet Explorer"><svg viewBox="0 0 16 16" width="16" height="16"><path d="M3 9h10q0-5-5-5T3 9t5 5q3 0 5-3" fill="none" stroke="#2b8fdc" stroke-width="3"/><path d="M1 14Q0 10 8 4t7-1" fill="none" stroke="#e2b33a" stroke-width="2"/></svg></a>
        <a href="#" aria-label="Firefox"><svg viewBox="0 0 16 16" width="16" height="16"><circle cx="8" cy="8" r="7" fill="#2d55a5"/><path d="M1 5q-2 8 5 10t9-4q1-5-2-8 0 7-5 7-4 0-3-3l2-1-2-2Q3 5 1 2z" fill="#e4702a"/><path d="M3 11q4 4 9 0" fill="none" stroke="#f9b93a" stroke-width="2"/></svg></a>
        <span class="chevron">»</span>
    </div>
    <div class="tasks">
        <button><svg viewBox="0 0 16 16" width="16" height="16"><circle cx="8" cy="8" r="7" fill="#2d55a5"/><path d="M1 5q-2 8 5 10t9-4q1-5-2-8 0 7-5 7-4 0-3-3l2-1-2-2Q3 5 1 2z" fill="#e4702a"/><path d="M3 11q4 4 9 0" fill="none" stroke="#f9b93a" stroke-width="2"/></svg>Microsoft Word - BCI_...</button>
        <button><svg viewBox="0 0 16 16" width="16" height="16"><path d="M8 1q7 0 7 5.500T9 12l-4 3v-4Q1 10 1 6.500 1 1 8 1z" fill="#e6e6e6" stroke="#777"/></svg>Google Talk</button>
        <button class="active"><svg viewBox="0 0 16 16" width="16" height="16"><path d="M1 15V3q0-2 3-2h11v14z" fill="#f7d5c8" stroke="#d9502c"/><path d="M5 15V7q0-2 2-2h8M8 8h5v4H8zM8 8v6" fill="none" stroke="#d9502c" stroke-width="2"/></svg>Microsoft PowerPoint...</button>
        <button><svg viewBox="0 0 16 16" width="16" height="16"><path d="M3 1h12v14H3z" fill="#fff" stroke="#3e62ad"/><path d="M1 3h10v9H1z" fill="#4d78c6" stroke="#2c4d94"/><path d="M3 5l1 5 2-4 2 4 1-5M12 5h2M12 8h2M12 11h2" fill="none" stroke="#dfe9fa"/></svg>debris.jpg - Microsoft ...</button>
        <button><svg viewBox="0 0 16 16" width="16" height="16"><path d="M5 7h7l-2 8H7z" fill="#f0efe9" stroke="#a7a39a"/><path d="M7 9L3 1M8 9V2M9 9l3-7" stroke="#c39443" stroke-width="2"/><path d="M7 10h3l-1 5H7z" fill="#c34436"/></svg>debris - Paint</button>
    </div>
    <div class="tray">
        <span class="chevron">«</span>
        <svg class="shield" viewBox="0 0 16 16" width="16" height="16"><circle cx="8" cy="8" r="7" fill="#a9c7e2" stroke="#6d7f94"/><path d="M4 10q0-6 7-6" fill="none" stroke="#d36d33" stroke-width="2"/><path d="M11 7l5 8H6z" fill="#f8cf2f" stroke="#8c6d0a"/><path d="M11 9v3M11 13v1" stroke="#222"/></svg>
        <svg viewBox="0 0 16 16" width="16" height="16"><path d="M4 1h10v8H4zM1 5h10v8H1z" fill="#1f59b5" stroke="#7e97bd"/><circle cx="11" cy="11" r="4" fill="#3aa49a"/><path d="M9 9l4 1-2 4z" fill="#6ecb56"/></svg>
        <svg viewBox="0 0 16 16" width="16" height="16"><path d="M1 5h3l4-4v14l-4-4H1z" fill="#eee" stroke="#666"/><path d="M10 5q2 3 0 6M12 3q3 5 0 10" fill="none" stroke="#3d8a4a"/></svg>
        <time>3:48 PM</time>
    </div>
</footer>

</body>
</html>
```

FILE: styles.css
```css
* {
    box-sizing: border-box;
}
body {
    margin: 0;
    height: 100vh;
    display: flex;
    flex-direction: column;
    overflow: hidden;
    background-color: #bfdbff;
    color: #15428b;
    font-family: "Open Sans", "Noto Sans", sans-serif;
    font-size: 11px;
    line-height: 14px;
}
button {
    font: inherit;
    color: inherit;
    background: none;
    border: none;
    padding: 0;
    margin: 0;
    white-space: nowrap;
}
svg {
    display: block;
    flex: none;
}
ul, ol {
    margin: 0;
    padding: 0;
    list-style: none;
}

/* Small drop-down triangle */
.caret {
    display: inline-block;
    flex: none;
    vertical-align: middle;
    border: 3px solid transparent;
    border-top-color: #4f6f9f;
    border-bottom-width: 0;
}
.caret.light {
    border-top-color: #a3b0c4;
}

/* Title bar */
.title-bar {
    position: relative;
    display: flex;
    align-items: center;
    height: 25px;
    padding: 2px 4px 0 45px;
    background: linear-gradient(#c4dcfa, #d3e4fb 40%, #e4effd);
    border-bottom: 1px solid #a5c7f3;
}
.orb {
    position: absolute;
    left: 3px;
    top: 3px;
    z-index: 2;
}
.quick-access {
    display: flex;
    align-items: center;
    gap: 5px;
    height: 21px;
    padding: 0 14px 0 7px;
    border: 1px solid #a9c6ea;
    border-left: none;
    border-radius: 0 11px 11px 0;
    background: linear-gradient(#dfebfb, #c6dbf5);
}
.qat-more {
    margin-left: 4px;
}
.title-bar h1 {
    flex: 1;
    margin: 0;
    padding-right: 90px;
    text-align: center;
    font-size: 12px;
    font-weight: normal;
    color: #3e6aaa;
}
.title-bar h1 span {
    color: #6a7485;
}
.window-buttons {
    display: flex;
    gap: 9px;
    padding-bottom: 6px;
}

/* Tabs */
.tabs {
    display: flex;
    align-items: flex-end;
    gap: 4px;
    height: 24px;
    padding: 0 4px 0 49px;
}
.tabs button {
    height: 22px;
    padding: 0 12px;
}
.tabs .active {
    background: linear-gradient(#f4f9ff, #e1ecfa);
    border: 1px solid #8db2e3;
    border-bottom: none;
    border-radius: 3px 3px 0 0;
    padding: 0 10px;
}
.tabs .help {
    margin-left: auto;
    padding: 0;
}

/* Ribbon */
.ribbon {
    display: flex;
    gap: 3px;
    margin: 0 1px;
    padding: 2px;
    border: 1px solid #8db2e3;
    border-radius: 3px;
    background: linear-gradient(#dbe6f4, #d0dff0 18%, #c7d8ed 22%, #d7e6f5 75%, #e3f4fc);
}
.group {
    display: flex;
    flex-direction: column;
    border: 1px solid #a4c0e2;
    border-radius: 3px;
    background: linear-gradient(#dfe9f5, #d1dff0 18%, #cad9ec 22%, #dbe8f6);
    box-shadow: inset 0 0 0 1px rgba(255, 255, 255, 0.3);
}
.group-body {
    display: flex;
    height: 67px;
    padding: 1px 0 0 3px;
}
.group footer {
    display: flex;
    align-items: center;
    justify-content: center;
    position: relative;
    height: 16px;
    background-color: #c1d8f0;
    color: #3e6aaa;
}
.group .with-launcher {
    padding-right: 18px;
}
.launcher {
    position: absolute;
    right: 5px;
    top: 4px;
}
.clipboard {
    width: 151px;
}
.slides {
    width: 119px;
}
.font {
    width: 227px;
}
.paragraph {
    width: 294px;
}
.drawing {
    width: 348px;
}
.editing {
    width: 84px;
}
.big {
    display: flex;
    flex-direction: column;
    align-items: center;
    width: 42px;
    padding-top: 1px;
    line-height: 13px;
}
.big > svg {
    margin-bottom: 5px;
}
.big > .caret {
    margin-top: 5px;
}
.stack {
    display: flex;
    flex-direction: column;
    padding-left: 3px;
}
.stack button {
    display: flex;
    align-items: center;
    gap: 4px;
    height: 22px;
}
.big:disabled, .stack button:disabled {
    color: #8d96a3;
}
.rows {
    display: flex;
    flex-direction: column;
    gap: 7px;
    padding-top: 8px;
}
.row, .combo-row {
    display: flex;
    gap: 4px;
}
.combo-row {
    gap: 0;
}
.row select {
    appearance: none;
    height: 22px;
    padding: 0 3px;
    border: 1px solid #b7c6d9;
    border-radius: 0;
    background: #ededed linear-gradient(#a3a3a3, #a3a3a3) no-repeat right 5px center / 4px 2px;
    color: #8d96a3;
    font: inherit;
    opacity: 1;
}
.font-name {
    width: 104px;
}
.font-size {
    width: 39px;
}
.button-set {
    display: flex;
    height: 22px;
    border: 1px solid #9ab6dc;
    border-radius: 3px;
    background: linear-gradient(#d9e6f5, #cddef2);
}
.button-set button {
    display: flex;
    align-items: center;
    justify-content: center;
    gap: 3px;
    width: 21px;
    color: #667fa8;
}
.button-set button + button {
    border-left: 1px solid #bfd2ea;
}
.button-set.even button {
    width: 23px;
}
.button-set .wide, .button-set.even .wide {
    width: 31px;
}
.serif {
    font-family: "Liberation Serif", serif;
    font-size: 14px;
    font-weight: bold;
}
.button-set .grow, .button-set .shrink {
    gap: 0;
}
.grow {
    font-size: 16px;
}
.serif sup {
    font-size: 8px;
    line-height: 8px;
}
.strike {
    font-size: 11px;
}
.shadow {
    text-shadow: 1px 1px 2px #7b92b8;
}
.colour span {
    border-bottom: 3px solid #969ba5;
    line-height: 12px;
    padding: 0 2px;
}
.svg-aa, .svg-ab, .svg-ac {
    font-family: "Liberation Sans", Arial, sans-serif;
    font-size: 9px;
    font-weight: bold;
    fill: #667fa8;
}
.svg-av {
    font-family: "Liberation Serif", serif;
    font-size: 10px;
    fill: #667fa8;
}
.svg-ab {
    fill: #33486f;
}
.svg-ac {
    fill: #2f7d3b;
}
.gallery {
    display: flex;
    height: 61px;
    margin: 2px 2px 0 0;
    border: 1px solid #b9d0ed;
    background-color: #d8e7f8;
}
.gallery-scroll {
    display: flex;
    flex-direction: column;
    width: 14px;
    border-left: 1px solid #b9d0ed;
}
.gallery-scroll button {
    flex: 1;
    display: flex;
    align-items: center;
    justify-content: center;
}
.gallery-scroll button + button {
    border-top: 1px solid #b9d0ed;
}
.arrange {
    width: 45px;
}

/* Work area */
.work {
    flex: 1;
    display: flex;
    min-height: 0;
    padding-top: 1px;
    background-color: #a9c9f7;
}
.panel {
    display: flex;
    flex-direction: column;
    width: 290px;
    flex: none;
    border-right: 1px solid #dcebfd;
}
.panel-tabs {
    position: relative;
    display: flex;
    align-items: center;
    height: 20px;
    padding: 0 7px 0 8px;
    gap: 26px;
    background-color: #c2daf8;
    border-bottom: 1px solid #6f97cd;
    color: #00005a;
}
.panel-tabs button {
    position: relative;
}
.panel-tabs .active {
    font-weight: bold;
}
.panel-tabs .close {
    margin-left: auto;
}
.panel-tabs .tab-shape {
    position: absolute;
    left: 0;
    top: 0;
}
.panel-body {
    flex: 1;
    display: flex;
    min-height: 0;
    background: radial-gradient(ellipse 420px 140px at 0 0, rgba(255, 255, 255, 0.3) 99%, transparent), linear-gradient(#a6c4ec, #7f9fd0 30%, #5f88c4 80%, #628cc8);
}
.thumbs {
    flex: 1;
    display: flex;
    flex-direction: column;
    gap: 3px;
    padding: 5px 3px 0;
    overflow: hidden;
}
.thumbs li {
    display: flex;
    flex: none;
    padding: 5px 5px 6px 0;
}
.thumbs .selected {
    background: linear-gradient(#fbd9a8, #f8c27c 35%, #f0a03c 36%, #f4a94a);
    outline: 1px solid #e08a45;
}
.num {
    width: 21px;
    padding-top: 3px;
    color: #fff;
    font-weight: bold;
    font-size: 11px;
    text-shadow: 1px 1px 1px #33507f;
}
.thumb {
    flex: 1;
    height: 183px;
    border: 1px solid #fff;
    background: linear-gradient(#333, #0d0d0d 93%, #000 94%);
    box-shadow: 1px 1px 3px #2d4a78;
}

/* Chart thumbnails */
.chart-text text, .axis-days text, .notes-text text, .mid {
    text-anchor: middle;
}
.chart-text, .axis-days, .mid {
    font-family: "Liberation Sans", Arial, sans-serif;
    font-weight: bold;
}
.t11, .axis-days {
    font-size: 11px;
}
.t13 {
    font-size: 13px;
}
.t18 {
    font-size: 18px;
}
.t20, .axis-days.large {
    font-size: 20px;
}
.t32 {
    font-size: 32px;
}
.up {
    transform: rotate(-90deg);
    transform-box: fill-box;
    transform-origin: center;
}
.notes-text {
    font-family: "Liberation Sans", Arial, sans-serif;
    font-size: 18px;
    fill: #3a3aa5;
}
.notes-text .cyan {
    fill: #3fe0e0;
}
.notes-text .brown {
    fill: #a8481c;
}
.grid {
    fill: none;
    stroke: #000;
    stroke-width: 3;
}
.line {
    fill: none;
    stroke-width: 3;
    stroke-linejoin: round;
    marker-mid: url(#dot);
}
.line.red {
    stroke: #d01c1c;
}
.line.yellow {
    stroke: #f0f020;
    stroke-width: 4;
}
.line.green {
    stroke: #2fb52f;
}
.line.navy {
    stroke: #14149a;
}
.base {
    fill: #000;
    stroke: #000;
    stroke-width: 4;
}
.gap {
    fill: none;
    stroke: #fff;
    stroke-width: 3;
    stroke-dasharray: 9 5;
}
.rain {
    stroke: #1a1ab0;
    stroke-width: 3;
}
.met {
    stroke: #b5532b;
    stroke-width: 3;
}
.ocean {
    fill: rgba(60, 240, 240, 0.5);
    stroke: #1fd5dc;
    stroke-width: 3;
}

/* Text and table thumbnails */
.mini-title, .mini-one, .mini-two {
    font-family: "Liberation Serif", "Times New Roman", serif;
    fill: #ff0;
}
.mini-title {
    font-size: 59px;
    font-style: italic;
    text-anchor: middle;
}
.mini-one {
    font-size: 42px;
}
.mini-two {
    font-size: 36px;
    fill: #0f0;
}
.mini-two.red {
    fill: #f00;
}
.table-thumb {
    overflow: hidden;
}
.table-thumb table {
    width: 100%;
    border-collapse: collapse;
    border-right: 16px solid transparent;
    font-family: "Liberation Serif", "Times New Roman", serif;
    font-size: 7px;
    line-height: 9px;
    text-align: center;
    color: #ff0;
}
.table-thumb th {
    padding: 0;
    font-weight: normal;
    vertical-align: top;
    color: #fff;
}
.table-thumb td {
    padding: 0;
}
.table-thumb sub {
    font-size: 5px;
    line-height: 1px;
}
.table-thumb th:nth-child(3), .table-thumb td:nth-child(3) {
    border-left: 1px solid #000;
}
.table-thumb .blue {
    color: #2222f0;
}
.table-thumb .line-above {
    border-top: 1px solid #000;
}

/* Scroll bars */
.scrollbar {
    display: flex;
    flex-direction: column;
    align-items: center;
    width: 15px;
    flex: none;
    padding-top: 7px;
    background: linear-gradient(90deg, #6d90c4, #8fafdb);
    border-left: 1px solid #9dbbe5;
}
.scrollbar .arrow {
    border: 4px solid transparent;
    border-bottom-width: 0;
    border-top-color: #3f5f93;
    margin-bottom: 4px;
}
.scrollbar .arrow.up {
    border-top-width: 0;
    border-bottom: 4px solid #3f5f93;
}
.track {
    flex: 1;
    align-self: stretch;
    display: flex;
    flex-direction: column;
    align-items: center;
}
.track::before {
    content: "";
    flex: 325 0 0;
}
.track::after {
    content: "";
    flex: 476 0 0;
}
.grip {
    width: 14px;
    height: 43px;
    border: 1px solid #7088ae;
    border-radius: 2px;
    background: repeating-linear-gradient(#6f84a8 0 1px, transparent 1px 3px) no-repeat center / 8px 8px, linear-gradient(90deg, #fafcff, #c9d8ee);
}
.main-scroll {
    width: 16px;
}
.main-scroll .grip {
    height: 13px;
}
.main-scroll .track::before {
    flex-grow: 329;
}
.main-scroll .track::after {
    flex-grow: 425;
}
.slide-nav {
    display: flex;
    flex-direction: column;
    align-items: center;
    align-self: stretch;
    gap: 6px;
    height: 47px;
    padding-top: 4px;
    background-color: #a9c9f7;
}
.off {
    width: 16px;
    opacity: 0.7;
}

/* Editor */
.editor {
    flex: 1;
    display: flex;
    flex-direction: column;
    min-width: 0;
    margin-left: 9px;
    border-left: 1px solid #6f97cd;
}
.stage {
    flex: 1;
    display: flex;
    min-height: 0;
}
.canvas {
    flex: 1;
    position: relative;
    display: flex;
    justify-content: center;
    padding: 15px;
    min-width: 0;
    background: linear-gradient(#a6c5ee, #7d9fcf 32%, #5a82bd 75%, #628dc9);
}
.swoosh {
    position: absolute;
    left: 0;
    top: 0;
}
.slide {
    height: 100%;
    aspect-ratio: 1070 / 802;
    padding-top: 30px;
    background: linear-gradient(#333, #2d2d2d 40%, #0b0b0b 94%, #000 94%);
    box-shadow: 3px 3px 8px #2d4a78;
    color: #ff0;
    font-family: "Liberation Serif", "Times New Roman", serif;
}
.slide h2 {
    margin: 0 0 17px;
    text-align: center;
    font-size: 59px;
    line-height: 72px;
    font-style: italic;
    font-weight: normal;
}
.slide ul {
    padding-left: 103px;
    font-size: 42px;
    line-height: 48px;
}
.slide li {
    position: relative;
    margin-top: 7px;
}
.slide li::before {
    content: "•";
    position: absolute;
    left: -39px;
}
.slide ul ul {
    padding-left: 48px;
    font-size: 36px;
    line-height: 39px;
    color: #0f0;
}
.slide ul ul li::before {
    left: -33px;
}
.slide ul .answer {
    color: #f00;
}
.notes {
    display: flex;
    height: 57px;
    border-top: 9px solid #a9ccfa;
    background-color: #fff;
}
.notes textarea {
    flex: 1;
    resize: none;
    border: none;
    outline: none;
    padding: 6px 10px;
    color: #000;
    font-family: inherit;
    font-size: 15px;
    line-height: 20px;
    overflow: hidden;
}
.notes textarea::placeholder {
    color: #000;
    opacity: 1;
}

/* Status bar */
.status {
    display: flex;
    align-items: center;
    height: 23px;
    border-top: 1px solid #567db1;
    background: linear-gradient(#dcebff, #c4dbf8 35%, #b2cff3 40%, #d3e5fb);
}
.status > span {
    padding: 0 9px;
    border-right: 1px solid #98b8e2;
    line-height: 20px;
}
.status > span:first-child {
    padding-left: 8px;
}
.status-right {
    display: flex;
    align-items: center;
    height: 100%;
    margin-left: auto;
    padding: 0 4px 0 6px;
    border-left: 1px solid #567db1;
    background: linear-gradient(#a9c8f2, #85abe0 40%, #7aa3dc 45%, #a8c8f2);
}
.views {
    display: flex;
    border: 1px solid #7392c2;
    border-radius: 2px;
    background-color: #d5e4f7;
}
.views button {
    display: flex;
    align-items: center;
    justify-content: center;
    width: 18px;
    height: 16px;
}
.views button + button {
    border-left: 1px solid #aac3e6;
}
.views .active {
    background: linear-gradient(#fce0a0, #f9bb52);
}
.percent {
    padding: 0 9px 0 8px;
}
.status input {
    appearance: none;
    width: 102px;
    height: 16px;
    margin: 0;
    background: linear-gradient(#e6effb, #e6effb) no-repeat center / 100% 1px;
}
.status input::-webkit-slider-thumb {
    appearance: none;
    width: 9px;
    height: 13px;
    border: 1px solid #46597c;
    border-radius: 1px 1px 5px 5px;
    background: #e6effb;
}
.fit {
    margin-left: 9px;
}

/* Taskbar */
.taskbar {
    display: flex;
    align-items: center;
    height: 27px;
    padding: 0 3px;
    background-color: #eee;
    border-top: 1px solid #fff;
    color: #000;
    font-size: 12px;
}
.taskbar button {
    display: flex;
    align-items: center;
    gap: 4px;
    height: 22px;
    padding: 0 4px;
    border: 1px solid;
    border-color: #fff #6b6b6b #6b6b6b #fff;
    box-shadow: inset -1px -1px 0 #a8a8a8;
}
.taskbar .start {
    padding: 0 2px 0 1px;
    gap: 1px;
    font-size: 11px;
    font-weight: bold;
}
.quick-launch {
    display: flex;
    align-items: center;
    gap: 7px;
    padding: 0 8px;
}
.chevron {
    font-weight: bold;
    font-size: 14px;
}
.quick-launch .chevron {
    margin-left: 8px;
}
.tasks {
    display: flex;
    gap: 4px;
    flex: 1;
}
.tasks button {
    width: 159px;
}
.tasks .active {
    border-color: #6b6b6b #fff #fff #6b6b6b;
    box-shadow: inset 1px 1px 0 #a8a8a8;
    background-color: #f8f8f8;
    font-size: 11px;
    font-weight: bold;
}
.tray {
    display: flex;
    align-items: center;
    gap: 2px;
    height: 22px;
    padding: 0 10px 0 4px;
    border: 1px solid;
    border-color: #8a8a8a #fff #fff #8a8a8a;
}
.tray .shield {
    margin: 0 8px 0 5px;
}
.tray time {
    margin-left: 6px;
}
```
